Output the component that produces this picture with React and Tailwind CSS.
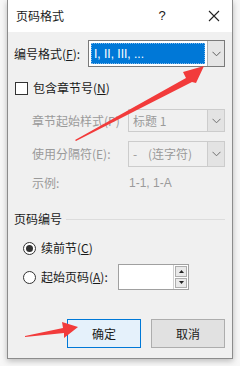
import React from "react";

const Chevron = ({ color = "#606060" }) => (
  <svg width="9" height="6" viewBox="0 0 9 6">
    <path d="M0.5 0.8 L4.5 4.8 L8.5 0.8" fill="none" stroke={color} strokeWidth="1" />
  </svg>
);

export default function App() {
  const font = { fontFamily: '"Noto Sans CJK SC", "Microsoft YaHei", sans-serif' };
  return (
    <div className="relative w-[240px] h-[366px] bg-[#f7f7f7] overflow-hidden" style={font}>
      <div className="ml-[7px] w-[226px] h-[359px] border-x border-b border-[#8c8c8c] bg-[#f0f0f0] shadow-[0_2px_6px_rgba(0,0,0,0.25)] flex flex-col">
        {/* title bar */}
        <div className="h-[32px] bg-white flex items-center pl-[8px] text-[12px] text-[#1a1a1a]">
          <span className="flex-1">页码格式</span>
          <span className="w-[20px] text-center text-[13px] mr-[36px]" style={{ fontFamily: '"Liberation Sans", sans-serif' }}>?</span>
          <svg width="12" height="12" viewBox="0 0 12 12" className="mr-[12px]">
            <path d="M1 1 L11 11 M11 1 L1 11" stroke="#222" strokeWidth="1.1" />
          </svg>
        </div>
        {/* body */}
        <div className="flex flex-col pl-[6px] pr-[7px] text-[12px] text-[#1a1a1a] whitespace-nowrap">
          {/* number format */}
          <div className="flex items-center mt-[8px] h-[27px]">
            <span className="w-[74px]">编号格式(<u>F</u>):</span>
            <div className="flex h-[27px] w-[137px] border border-[#7a7a7a] bg-white">
              <div className="flex-1 p-[2px]">
                <div className="h-full bg-[#0078d7] border border-dotted border-[#7fb8ea] flex items-center pl-[2px] text-white text-[12px]" style={{ fontFamily: '"Liberation Sans", sans-serif' }}>
                  I, II, III, ...
                </div>
              </div>
              <div className="w-[17px] bg-[#e5e5e5] border-l border-[#b0b0b0] flex items-center justify-center">
                <Chevron />
              </div>
            </div>
          </div>
          {/* checkbox */}
          <div className="flex items-center mt-[12px] h-[18px]">
            <div className="w-[13px] h-[13px] border border-[#333] bg-white ml-[1px] mr-[5px]" />
            <span>包含章节号(<u>N</u>)</span>
          </div>
          {/* chapter style */}
          <div className="flex items-center mt-[12px] h-[23px] text-[#9a9a9a]">
            <span className="w-[114px] pl-[18px]">章节起始样式(P)</span>
            <div className="flex h-[23px] w-[97px] border border-[#cccccc] bg-[#f0f0f0]">
              <span className="flex-1 pl-[4px] flex items-center">标题 1</span>
              <div className="w-[17px] bg-[#e3e3e3] border-l border-[#cccccc] flex items-center justify-center">
                <Chevron color="#707070" />
              </div>
            </div>
          </div>
          {/* separator */}
          <div className="flex items-center mt-[9px] h-[26px] text-[#9a9a9a]">
            <span className="w-[114px] pl-[18px]">使用分隔符(E):</span>
            <div className="flex h-[26px] w-[97px] border border-[#cccccc] bg-[#f0f0f0]">
              <span className="flex-1 pl-[4px] flex items-center whitespace-pre">-    (连字符)</span>
              <div className="w-[17px] bg-[#e3e3e3] border-l border-[#cccccc] flex items-center justify-center">
                <Chevron color="#707070" />
              </div>
            </div>
          </div>
          {/* example */}
          <div className="flex items-center mt-[6px] h-[20px] text-[#9a9a9a]">
            <span className="w-[115px] pl-[18px]">示例:</span>
            <span style={{ fontFamily: '"Liberation Sans", sans-serif' }}>1-1, 1-A</span>
          </div>
          {/* group */}
          <div className="flex items-center mt-[18px] h-[16px]">
            <span className="mr-[4px]">页码编号</span>
            <div className="flex-1 h-px bg-[#dcdcdc]" />
          </div>
          {/* radio 1 */}
          <div className="flex items-center mt-[12px] h-[18px] pl-[9px]">
            <div className="w-[13px] h-[13px] rounded-full border border-[#333] bg-white flex items-center justify-center mr-[5px]">
              <div className="w-[7px] h-[7px] rounded-full bg-[#333]" />
            </div>
            <span>续前节(<u>C</u>)</span>
          </div>
          {/* radio 2 */}
          <div className="flex items-center mt-[7px] h-[26px] pl-[9px]">
            <div className="w-[13px] h-[13px] rounded-full border border-[#333] bg-white mr-[5px]" />
            <span className="w-[77px]">起始页码(<u>A</u>):</span>
            <div className="flex h-[26px] w-[71px] border border-[#a0a0a0] bg-white">
              <div className="flex-1" />
              <div className="w-[15px] flex flex-col border-l border-[#d0d0d0]">
                <div className="flex-1 flex items-center justify-center border border-[#adadad] bg-[#e9e9e9] m-[1px] mb-0">
                  <svg width="5" height="3" viewBox="0 0 5 3"><path d="M0 3 L2.5 0 L5 3 Z" fill="#222" /></svg>
                </div>
                <div className="flex-1 flex items-center justify-center border border-[#adadad] bg-[#e9e9e9] m-[1px]">
                  <svg width="5" height="3" viewBox="0 0 5 3"><path d="M0 0 L2.5 3 L5 0 Z" fill="#222" /></svg>
                </div>
              </div>
            </div>
          </div>
          {/* buttons */}
          <div className="flex justify-end gap-[10px] mt-[29px]">
            <button className="w-[74px] h-[29px] border border-[#0078d7] bg-[#e5f1fb] text-[12px] text-[#1a1a1a]">确定</button>
            <button className="w-[74px] h-[29px] border border-[#adadad] bg-[#e1e1e1] text-[12px] text-[#1a1a1a]">取消</button>
          </div>
        </div>
      </div>
      {/* red arrows overlay */}
      <svg className="absolute left-0 top-0 pointer-events-none" width="240" height="366" viewBox="0 0 240 366">
        <path d="M75 140 L186 78 L183 72 L204 66 L196 83 L192 82 L76 141 Z" fill="#f23b3b" />
        <path d="M25 336 L63 328 L62 322 L78 327 L64 338 L64 333 L25 337 Z" fill="#f23b3b" />
      </svg>
    </div>
  );
}
